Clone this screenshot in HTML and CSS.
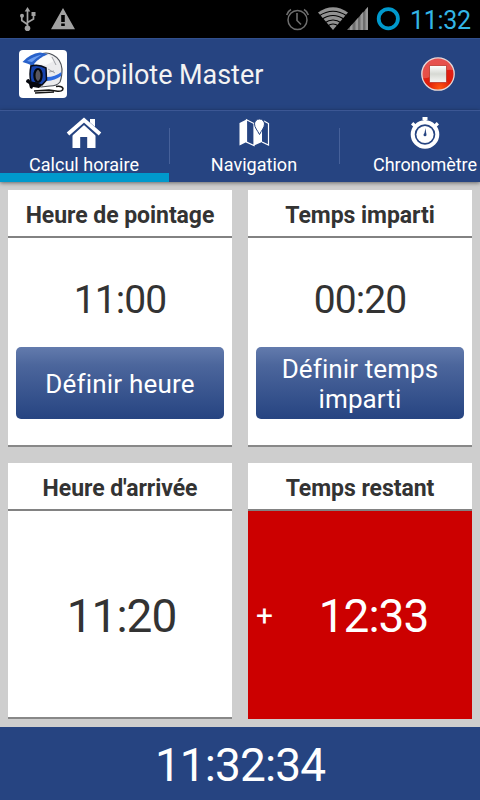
FILE: index.html
```html
<!DOCTYPE html>
<html lang="fr">
<head>
<meta charset="utf-8">
<title>Copilote Master</title>
<link rel="stylesheet" href="styles.css">
</head>
<body>
<div class="screen">
  <div class="status">
    <svg class="status-icons" width="80" height="38" viewBox="0 0 80 38">
      <g fill="none" stroke="#a2a2a2" stroke-width="1.7">
        <path d="M27.500 28V10M27.500 24.500L21.800 20.500V16M27.500 22.500L33.500 19V14"/>
      </g>
      <g fill="#a2a2a2">
        <path d="M24.700 11.500L27.500 7l2.800 4.500z"/>
        <circle cx="27.500" cy="28.300" r="2.800"/><circle cx="22" cy="15.700" r="2"/>
        <path d="M31.500 12h4v4h-4z"/>
        <path fill-rule="evenodd" d="M63 8L75 29.200H51zM61.200 15h3.600v7h-3.600zM61.200 23.500h3.600V26h-3.600z"/>
      </g>
    </svg>
    <span class="grow"></span>
    <svg class="status-icons" width="124" height="38" viewBox="284 0 124 38">
      <g fill="none" stroke="#6e6e6e">
        <circle cx="297.500" cy="20" r="9.500" stroke-width="1.500"/>
        <path stroke-width="1.600" d="M297 13v7.500l4 4M286.700 15c.7-2.500 2-4.300 4.300-5.500M308.300 15c-.7-2.500-2-4.300-4.300-5.500"/>
      </g>
      <path fill="#929292" d="M333 30L318 12.500Q333 2 348 12.500z"/>
      <g fill="none" stroke="#000" stroke-width="1.200">
        <path d="M319 16Q333 6.500 347 16M321.500 19.500Q333 11.500 344.500 19.500M324.500 23Q333 17 341.500 23M327.500 26Q333 22 338.500 26"/>
      </g>
      <path fill="#6e6e6e" d="M347 30L368 7v23z"/>
      <path fill="#999" d="M350 27v3h2.500v-6zM355.500 21v9h2.500V18zM360.500 15v15h2.500V12zM365.500 9.500V30h2.500V7z"/>
      <circle cx="388.300" cy="18.700" r="9.600" fill="none" stroke="#0099cc" stroke-width="3.800"/>
    </svg>
    <span class="status-time">11:32</span>
  </div>

  <div class="actionbar">
    <svg class="logo" width="48" height="48" viewBox="0 0 48 48">
      <rect width="48" height="48" rx="4" fill="#fff"/>
      <path d="M12 14L20 5Q27 1 34 5Q42 9 43 19Q43 27 41 32Q38 36 31 36L22 37L12 33z" fill="#ececee" stroke="#4c5057" stroke-width="1.200"/>
      <path d="M28 27Q36 27 42.500 22L42 26Q36 30.500 28 31z" fill="#2e6ce0"/>
      <path d="M3.500 12Q11 3.500 21 2.500L29 4Q22 7 18 11L14 16Q9 13.500 3.500 12z" fill="#2861ca"/>
      <path d="M8 11Q14 6.500 23 4.500Q17 8 13 12z" fill="#6c9def"/>
      <path d="M15 14Q21 7 30 5L35 11L27 15z" fill="#fafafa"/>
      <path d="M29 19L36 23M30 22l5-1M33 7L37 15" fill="none" stroke="#8c8e94" stroke-width=".8"/>
      <path d="M12 16Q20 14 27 18L27.500 30L23 35L12 32Q10 25 12 16z" fill="#1744ae" stroke="#070b18" stroke-width="1.500"/>
      <ellipse cx="19" cy="25.500" rx="3.600" ry="6.500" fill="#59565f" stroke="#05070d" stroke-width="2.200"/>
      <path d="M7 32q0-3 3-3l2 3 4 0 7 3-3 3-6-1-1 2-2-1-1-4z" fill="#05070d"/>
      <path d="M15 41L30 40L37 41Q44 42 44 38.500Q43 35.500 37 36.500M16 43L35 42" fill="none" stroke="#161616" stroke-width="1.500"/>
    </svg>
    <h1 class="title">Copilote Master</h1>
    <svg class="stop" width="36" height="36" viewBox="0 0 36 36">
      <defs>
        <radialGradient id="red" cx=".55" cy=".95" r=".9"><stop offset="0" stop-color="#ff5a10"/><stop offset=".4" stop-color="#df1d09"/><stop offset="1" stop-color="#df2020"/></radialGradient>
        <linearGradient id="sq" x2="0" y2="1"><stop offset="0" stop-color="#fff"/><stop offset=".5" stop-color="#d6d9d3"/><stop offset="1" stop-color="#f7f7f5"/></linearGradient>
      </defs>
      <circle cx="18" cy="18" r="16.200" fill="url(#red)" stroke="#e4dada" stroke-width="1.300"/>
      <path d="M2.500 22A15.500 15.500 0 0 1 33 14Q24 13 16 18T2.500 22z" fill="#fff" opacity=".22"/>
      <path d="M9.500 9.500h17v17h-17z" fill="url(#sq)" stroke="#b3281c" stroke-width=".7"/>
    </svg>
  </div>

  <nav class="tabs">
    <a class="tab active">
      <svg width="36" height="36" viewBox="0 0 36 36" fill="#fff">
        <path d="M24 5h5v9l-5-5z"/>
        <path d="M18 10.500l11.500 10V34h-8.300V23h-7v11H6.500V20.500z"/>
        <path d="M2.500 21L18 7 33.500 21" fill="none" stroke="#264481" stroke-width="6"/>
        <path d="M2 20L18 6l16 14" fill="none" stroke="#fff" stroke-width="3.800"/>
      </svg>
      <span>Calcul horaire</span>
    </a>
    <a class="tab">
      <svg width="36" height="36" viewBox="0 0 36 36" fill="#fff">
        <path d="M3.500 9L10.500 5.500V28L3.500 31.500zM18 9.500l3-1 3 9 2-2V28L18 31.500z"/>
        <path d="M10.500 5.800L18 9.500v22L10.500 28zM26 28l6.500 3V9.500L28 7" fill="none" stroke="#fff" stroke-width="1.200"/>
        <path d="M23.500 20.500c-2-4-5-7-5-10.500a5 5 0 0 1 10 0c0 3.500-3 6.500-5 10.500z" stroke="#264481" stroke-width="1"/>
      </svg>
      <span>Navigation</span>
    </a>
    <a class="tab last">
      <svg width="36" height="36" viewBox="0 0 36 36">
        <path d="M15.500 3h5v3h-1V9h-3V6h-1zM4 10.500L6.300 8l4.500 4.500-2.300 2.300zM32 10.500L29.700 8l-4.500 4.500 2.300 2.300z" fill="#fff"/>
        <circle cx="18" cy="20.500" r="12.300" fill="none" stroke="#fff" stroke-width="4"/>
        <circle cx="18" cy="20.500" r="8.600" fill="#fff"/>
        <path d="M18.500 14l.8 6h-2z" fill="#264481"/><circle cx="18" cy="20.700" r="1.500" fill="#264481"/>
      </svg>
      <span>Chronomètre</span>
    </a>
  </nav>

  <main class="grid">
    <section class="card">
      <h2>Heure de pointage</h2>
      <div class="body">
        <div class="value">11:00</div>
        <button>Définir heure</button>
      </div>
    </section>
    <section class="card">
      <h2>Temps imparti</h2>
      <div class="body">
        <div class="value">00:20</div>
        <button class="wide">Définir temps imparti</button>
      </div>
    </section>
    <section class="card">
      <h2>Heure d'arrivée</h2>
      <div class="body center"><div class="big">11:20</div></div>
    </section>
    <section class="card alert">
      <h2>Temps restant</h2>
      <div class="body center"><span class="sign">+</span><div class="big">12:33</div></div>
    </section>
  </main>

  <footer class="clock">11:32:34</footer>
</div>
</body>
</html>
```

FILE: styles.css
```css
* { box-sizing: border-box; }

body {
  margin: 0;
  font-family: Roboto, "Noto Sans", sans-serif;
  color: #333;
}

.screen {
  width: 480px;
  height: 800px;
  display: flex;
  flex-direction: column;
  overflow: hidden;
  background: #cecece;
}

svg { display: block; flex: none; }

.status {
  height: 38px;
  flex: none;
  display: flex;
  background: #000;
}

.grow { flex: 1; }

.status-time {
  width: 72px;
  padding-left: 2px;
  font-size: 25px;
  line-height: 41px;
  color: #33b5e5;
  letter-spacing: -0.3px;
}

.actionbar {
  height: 72px;
  flex: none;
  display: flex;
  align-items: center;
  padding: 0 24px 1px 19px;
  background: #264481;
  border-top: 1px solid #314f8d;
}

.logo { margin-bottom: 1px; }

.title {
  flex: 1;
  margin: 0 0 0 6px;
  padding-top: 2px;
  font-size: 27px;
  font-weight: 400;
  letter-spacing: -0.05px;
  color: #f3f3f3;
}

.tabs {
  height: 72px;
  flex: none;
  display: flex;
  background: linear-gradient(#3c5794, #3c5794) 0 0 / 100% 1px no-repeat, #264481;
  box-shadow: 0 1px 4px rgba(0, 0, 0, 0.5);
}

.tab {
  width: 170px;
  flex: none;
  display: flex;
  flex-direction: column;
  align-items: center;
  padding: 4px 2px 0 0;
  font-size: 18px;
  line-height: 22px;
  color: #fff;
  background: linear-gradient(#46619a, #46619a) 100% 18px / 1px 36px no-repeat;
}

.tab span {
  margin-top: 4px;
  letter-spacing: 0.03px;
}

.tab.last { padding-right: 0; }

.tab.last span { letter-spacing: -0.08px; }

.tab.active {
  background:
    linear-gradient(#46619a, #46619a) 100% 18px / 1px 36px no-repeat,
    linear-gradient(#0099cc, #0099cc) 0 100% / 169px 9px no-repeat;
}

.grid {
  height: 545px;
  flex: none;
  display: grid;
  grid-template-columns: 224px 224px;
  grid-template-rows: 257px 256px;
  gap: 16px;
  padding: 8px;
}

.card {
  display: flex;
  flex-direction: column;
  background: #fff;
  border-bottom: 2px solid #888;
}

.card h2 {
  height: 48px;
  flex: none;
  margin: 0;
  border-bottom: 2px solid #828282;
  font-size: 23px;
  line-height: 52px;
  font-weight: 700;
  letter-spacing: -0.05px;
  text-align: center;
}

.body {
  flex: 1;
  display: flex;
  flex-direction: column;
  padding: 38px 8px 0;
}

.value {
  height: 71px;
  font-size: 39px;
  line-height: 49px;
  letter-spacing: -0.9px;
  text-align: center;
}

button {
  height: 72px;
  padding: 2px 16px 0;
  border: 0;
  border-radius: 5px;
  background: linear-gradient(#637bad, #4c669c 25%, #264481);
  color: #fff;
  font: 400 26px/30px Roboto, "Noto Sans", sans-serif;
  letter-spacing: 0.2px;
}

.wide { letter-spacing: 0.1px; }

.center {
  flex-direction: row;
  align-items: center;
  padding: 4px 8px 0;
}

.big {
  flex: 1;
  padding-left: 3px;
  font-size: 46px;
  letter-spacing: -1px;
  text-align: center;
}

.alert { border-bottom-color: #c00; }

.alert .body { background: #c00; color: #fff; }

.sign {
  width: 24px;
  padding-bottom: 2px;
  font-size: 30px;
}

.clock {
  height: 73px;
  flex: none;
  background: #264481;
  color: #fff;
  font-size: 46px;
  line-height: 77px;
  letter-spacing: -0.9px;
  text-align: center;
}
```
